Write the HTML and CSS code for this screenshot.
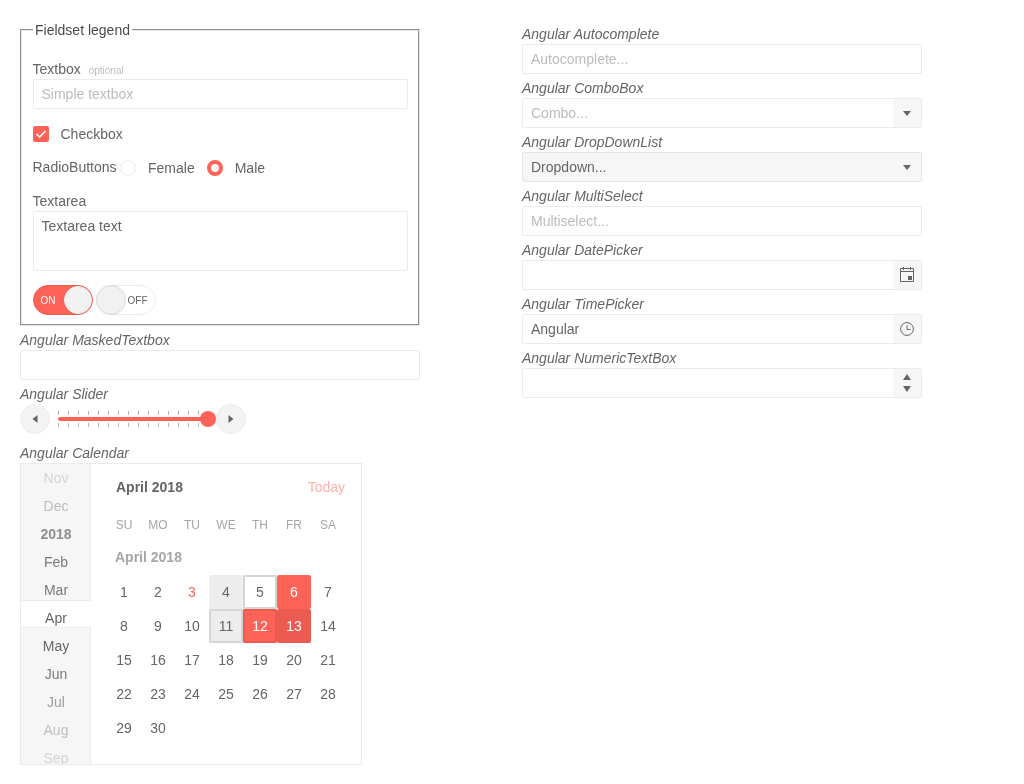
FILE: index.html
```html
<!DOCTYPE html>
<html lang="en">
<head>
  <meta charset="UTF-8" />
  <title>Angular form widgets</title>
  <link rel="stylesheet" href="styles.css">
</head>
<body>
  <div class="page">
    <div class="col-left">
      <fieldset class="form-box">
        <legend>Fieldset legend</legend>

        <div class="field-label field-first">Textbox <small>optional</small></div>
        <input class="textbox" type="text" placeholder="Simple textbox">

        <div class="check-row">
          <span class="check"><svg width="16" height="16" viewBox="0 0 16 16"><path d="M3.5 8.2 6.6 11 12.5 5" fill="none" stroke="#fff" stroke-width="1.6"/></svg></span>
          <span>Checkbox</span>
        </div>

        <div class="radio-row">
          <span class="radio-title">RadioButtons</span>
          <span class="radio"></span>
          <span class="radio-text">Female</span>
          <span class="radio radio-on"></span>
          <span class="radio-text">Male</span>
        </div>

        <div class="field-label field-area">Textarea</div>
        <div class="textarea">Textarea text</div>

        <div class="switches">
          <div class="switch switch-on"><span class="switch-text">ON</span><span class="knob"></span></div>
          <div class="switch switch-off"><span class="knob"></span><span class="switch-text">OFF</span></div>
        </div>
      </fieldset>

      <div class="title">Angular MaskedTextbox</div>
      <input class="textbox" type="text">

      <div class="title">Angular Slider</div>
      <div class="slider">
        <span class="round-btn"><svg width="6" height="8" viewBox="0 0 6 8"><path d="M5.5 0v8L.5 4z" fill="#656565"/></svg></span>
        <div class="slider-track">
          <div class="ticks"></div>
          <div class="bar"></div>
          <div class="ticks"></div>
          <span class="thumb"></span>
        </div>
        <span class="round-btn"><svg width="6" height="8" viewBox="0 0 6 8"><path d="M.5 0v8l5-4z" fill="#656565"/></svg></span>
      </div>

      <div class="title title-cal">Angular Calendar</div>
      <div class="calendar">
        <div class="cal-nav">
          <span class="nav-band"></span>
          <div class="nav-item fade-3">Nov</div>
          <div class="nav-item fade-2">Dec</div>
          <div class="nav-item nav-year">2018</div>
          <div class="nav-item fade-0">Feb</div>
          <div class="nav-item fade-0">Mar</div>
          <div class="nav-item">Apr</div>
          <div class="nav-item">May</div>
          <div class="nav-item fade-0">Jun</div>
          <div class="nav-item fade-1">Jul</div>
          <div class="nav-item fade-2">Aug</div>
          <div class="nav-item fade-3">Sep</div>
        </div>
        <div class="cal-main">
          <div class="cal-head">
            <b>April 2018</b>
            <span class="today">Today</span>
          </div>
          <div class="cal-grid week">
            <span>SU</span><span>MO</span><span>TU</span><span>WE</span><span>TH</span><span>FR</span><span>SA</span>
          </div>
          <div class="cal-caption">April 2018</div>
          <div class="cal-grid days">
            <span>1</span><span>2</span><span class="d-today">3</span><span class="d-hover">4</span><span class="d-focus">5</span><span class="d-sel">6</span><span>7</span>
            <span>8</span><span>9</span><span>10</span><span class="d-hover d-focus">11</span><span class="d-sel d-selfocus">12</span><span class="d-selhover">13</span><span>14</span>
            <span>15</span><span>16</span><span>17</span><span>18</span><span>19</span><span>20</span><span>21</span>
            <span>22</span><span>23</span><span>24</span><span>25</span><span>26</span><span>27</span><span>28</span>
            <span>29</span><span>30</span>
          </div>
        </div>
      </div>
    </div>

    <div class="col-right">
      <div class="title">Angular Autocomplete</div>
      <input class="textbox" type="text" placeholder="Autocomplete...">

      <div class="title">Angular ComboBox</div>
      <div class="picker">
        <span class="picker-value ph">Combo...</span>
        <span class="picker-btn"><svg width="8" height="5" viewBox="0 0 8 5"><path d="M0 0h8L4 5z" fill="#656565"/></svg></span>
      </div>

      <div class="title">Angular DropDownList</div>
      <div class="picker picker-solid">
        <span class="picker-value">Dropdown...</span>
        <span class="picker-btn"><svg width="8" height="5" viewBox="0 0 8 5"><path d="M0 0h8L4 5z" fill="#656565"/></svg></span>
      </div>

      <div class="title">Angular MultiSelect</div>
      <input class="textbox" type="text" placeholder="Multiselect...">

      <div class="title">Angular DatePicker</div>
      <div class="picker">
        <span class="picker-value"></span>
        <span class="picker-btn"><svg width="14" height="16" viewBox="0 0 14 16"><path d="M.5 1.5h13v13H.5zM.5 4.5h13" fill="none" stroke="#656565"/><path d="M3 0h1v3H3zM10 0h1v3h-1zM8 9h4v4H8z" fill="#656565"/></svg></span>
      </div>

      <div class="title">Angular TimePicker</div>
      <div class="picker">
        <span class="picker-value">Angular</span>
        <span class="picker-btn"><svg width="14" height="14" viewBox="0 0 14 14"><circle cx="7" cy="7" r="6.4" fill="none" stroke="#656565"/><path d="M7 3.5V7.5h3.5" fill="none" stroke="#656565"/></svg></span>
      </div>

      <div class="title">Angular NumericTextBox</div>
      <div class="picker">
        <span class="picker-value"></span>
        <span class="picker-btn spin">
          <svg width="8" height="6" viewBox="0 0 8 6"><path d="M0 6h8L4 0z" fill="#656565"/></svg>
          <svg width="8" height="6" viewBox="0 0 8 6"><path d="M0 0h8L4 6z" fill="#656565"/></svg>
        </span>
      </div>
    </div>
  </div>
</body>
</html>
```

FILE: styles.css
```css
* {
  box-sizing: border-box;
}
body {
  margin: 0;
  font-family: "Liberation Sans", Arial, sans-serif;
  font-size: 14px;
  color: #656565;
  background: #fff;
}
.page {
  display: flex;
  align-items: flex-start;
  padding: 0 20px;
  gap: 102px;
  will-change: opacity;
}
.col-left, .col-right {
  width: 400px;
  flex: none;
}
.col-right {
  padding-top: 24px;
}
.title {
  font-style: italic;
  line-height: 20px;
}
.col-right .title {
  margin-top: 4px;
}
.col-right .title:first-child {
  margin-top: 0;
}
.textbox {
  display: block;
  width: 100%;
  height: 30px;
  padding: 0 8px;
  border: 1px solid #ebebeb;
  border-radius: 2px;
  font: inherit;
  color: inherit;
  background: #fff;
  outline: none;
}
.textbox::placeholder, .ph {
  color: #bcbcbc;
  opacity: 1;
}

.form-box {
  width: 399px;
  height: 306px;
  margin: 20px 0 0;
  padding: 0 10px 0 10.5px;
  border: 2px groove #e4e4e4;
}
.form-box legend {
  padding: 0 2px 0 2.5px;
  color: #4a4a4a;
  line-height: 20px;
}
.field-label {
  line-height: 18px;
}
.field-label small {
  font-size: 10px;
  line-height: 1;
  color: #bcbcbc;
  margin-left: 4px;
}
.field-first {
  margin-top: 19px;
  line-height: 20px;
}
.form-box .textbox {
  width: 375px;
}
.check-row {
  display: flex;
  align-items: center;
  gap: 12px;
  height: 16px;
  margin-top: 17px;
}
.check {
  width: 16px;
  height: 16px;
  border-radius: 2px;
  background: #ff6358;
}
.check svg {
  display: block;
}
.radio-row {
  display: flex;
  align-items: center;
  height: 18px;
  margin-top: 17px;
}
.radio-title {
  width: 87.5px;
  margin-top: -2px;
}
.radio {
  width: 16px;
  height: 16px;
  border-radius: 50%;
  border: 1px solid #ebebeb;
}
.radio-on {
  border: 4px solid #ff6358;
  background: #fff;
}
.radio-text {
  margin: 0 12px;
}
.field-area {
  margin-top: 14px;
  line-height: 20px;
}
.textarea {
  width: 375px;
  height: 60px;
  padding: 5px 8px;
  border: 1px solid #ebebeb;
  border-radius: 2px;
  line-height: 18px;
}
.switches {
  display: flex;
  gap: 3px;
  margin-top: 14px;
}
.switch {
  display: flex;
  align-items: center;
  justify-content: space-between;
  width: 60px;
  height: 30px;
  border-radius: 15px;
  font-size: 10px;
  border: 1px solid #ebebeb;
}
.switch-on {
  background: #ff6358;
  border-color: #eb5b51;
  color: #fff;
  padding-left: 7px;
}
.switch-off {
  padding-right: 7px;
}
.knob {
  width: 28px;
  height: 28px;
  border-radius: 50%;
  background: #f1f1f1;
  border: 1px solid #f1f1f1;
}
.switch-off .knob {
  margin-left: -1px;
  height: 30px;
  width: 30px;
  border-color: #d9d9d9;
}

.form-box + .title {
  margin-top: 4px;
}
.col-left > .textbox + .title {
  margin-top: 4px;
}
.slider {
  display: flex;
  align-items: center;
  height: 30px;
}
.round-btn {
  display: flex;
  align-items: center;
  justify-content: center;
  flex: none;
  width: 30px;
  height: 30px;
  border-radius: 50%;
  background: #f3f3f3;
  border: 1px solid #ebebeb;
}
.slider-track {
  position: relative;
  width: 166px;
  height: 16px;
  padding: 0 8px;
}
.ticks {
  width: 141px;
  height: 4px;
  background: repeating-linear-gradient(to right, #b4b4b4 0, #b4b4b4 1px, transparent 1px, transparent 10px);
}
.bar {
  width: 150px;
  height: 4px;
  margin: 2px 0;
  border-radius: 2px;
  background: #ff6358;
}
.thumb {
  position: absolute;
  left: 150px;
  top: 0;
  width: 16px;
  height: 16px;
  border-radius: 50%;
  background: #ff6358;
}
.title-cal {
  margin-top: 9px;
}

.calendar {
  display: flex;
  width: 342px;
  height: 302px;
  border: 1px solid #ebebeb;
  overflow: hidden;
}
.cal-nav {
  position: relative;
  width: 70px;
  flex: none;
  background: #f6f6f6;
  border-right: 1px solid #ebebeb;
  text-align: center;
}
.nav-band {
  position: absolute;
  left: 0;
  top: 136px;
  width: 70px;
  height: 28px;
  background: #fff;
  border-top: 1px solid #ebebeb;
  border-bottom: 1px solid #ebebeb;
}
.nav-item {
  position: relative;
  height: 28px;
  padding-left: 1px;
  line-height: 28px;
}
.nav-year {
  font-weight: bold;
  color: #8f8f8f;
}
.fade-0 { color: #7a7a7a; }
.fade-1 { color: #9c9c9c; }
.fade-2 { color: #bcbcbc; }
.fade-3 { color: #d4d4d4; }
.cal-main {
  flex: 1;
  padding-left: 16px;
}
.cal-head {
  display: flex;
  justify-content: space-between;
  height: 46px;
  padding: 14px 16px 0 9px;
  line-height: 18px;
}
.today {
  color: #ffb1ab;
}
.cal-grid {
  display: grid;
  grid-template-columns: repeat(7, 34px);
  text-align: center;
}
.week {
  height: 30px;
  font-size: 12px;
  color: #a6a6a6;
  line-height: 30px;
}
.cal-caption {
  height: 35px;
  padding: 8px 0 0 8px;
  font-weight: bold;
  color: #a6a6a6;
  line-height: 18px;
}
.days span {
  height: 34px;
  line-height: 34px;
  border-radius: 2px;
}
.d-today {
  color: #ff6358;
}
.d-hover {
  background: #ededed;
}
.d-focus {
  box-shadow: inset 0 0 0 2px #d5d5d5;
}
.days .d-sel {
  background: #ff6358;
  color: #fff;
}
.days .d-selfocus {
  box-shadow: inset 0 0 0 2px #eb5b51;
}
.days .d-selhover {
  background: #eb5b51;
  color: #fff;
}

.picker {
  display: flex;
  height: 30px;
  border: 1px solid #ebebeb;
  border-radius: 2px;
}
.picker-value {
  flex: 1;
  padding: 0 8px;
  line-height: 28px;
}
.picker-btn {
  display: flex;
  align-items: center;
  justify-content: center;
  width: 28px;
  background: #f6f6f6;
}
.picker-solid {
  background: #f6f6f6;
  border-color: #e4e4e4;
}
.spin {
  flex-direction: column;
  gap: 6px;
}
```
